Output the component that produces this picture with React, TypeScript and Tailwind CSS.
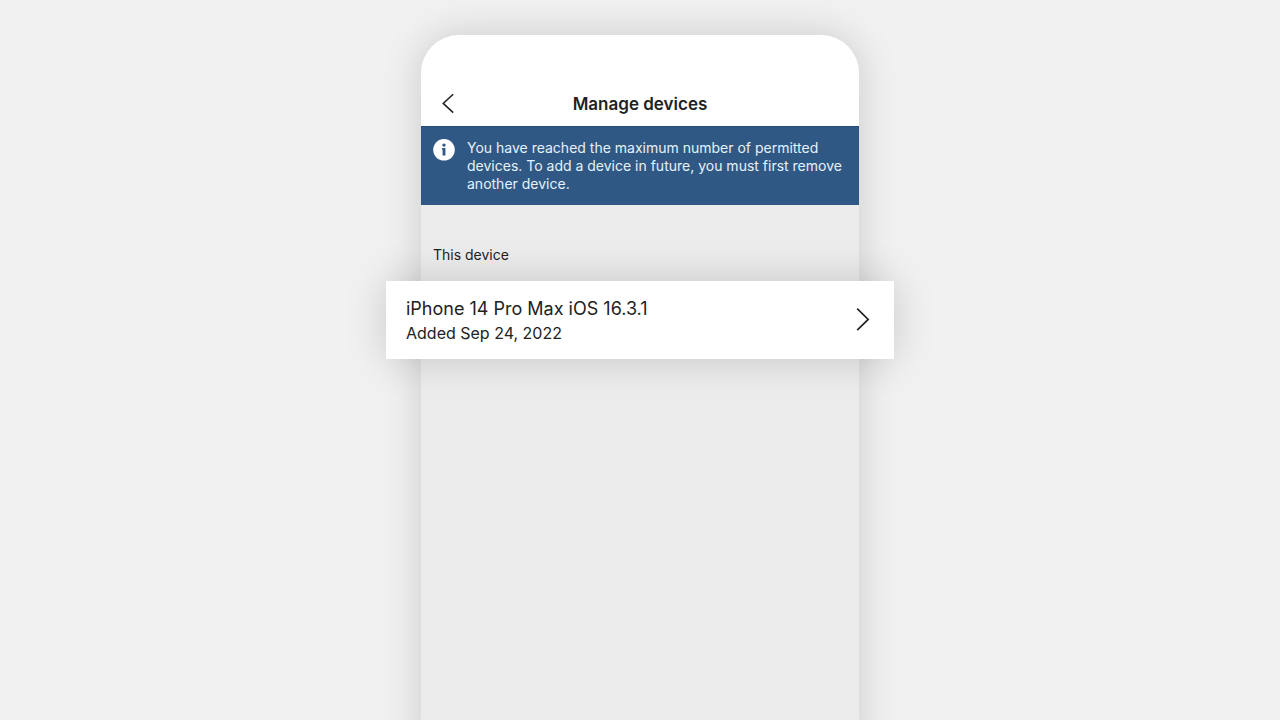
function BackIcon() {
  return (
    <svg className="h-5 w-3" viewBox="0 0 12 20" fill="none" stroke="currentColor" strokeWidth="1.5" aria-hidden="true">
      <path d="M11.2 0.2 1.2 9.4l10 9.2" />
    </svg>
  );
}

function ForwardIcon() {
  return (
    <svg className="h-6 w-3.5" viewBox="0 0 14 24" fill="none" stroke="currentColor" strokeWidth="1.7" aria-hidden="true">
      <path d="M1.2 0.6 12.2 11.4 1.2 22.2" />
    </svg>
  );
}

function InfoIcon() {
  return (
    <svg className="h-[22px] w-[22px] shrink-0" viewBox="0 0 22 22" aria-hidden="true">
      <circle cx="11" cy="10.8" r="10.8" fill="#fff" />
      <circle cx="11" cy="6.1" r="1.7" fill="#2f5984" />
      <path d="M9 8.9h3.4v7.6H9.6v-6H9z" fill="#2f5984" />
    </svg>
  );
}

function Header() {
  return (
    <header className="grid grid-cols-[1fr_auto_1fr] items-center rounded-t-[38px] bg-white px-5 pt-14 pb-[9px]">
      <button type="button" aria-label="Back" className="flex h-[26px] w-3.5 items-center justify-center">
        <BackIcon />
      </button>
      <h1 className="text-[17px] leading-[26px] font-semibold">Manage devices</h1>
    </header>
  );
}

function Notice() {
  return (
    <div role="status" className="flex gap-3 border-t border-[#264d78] bg-[#2f5984] py-3 pr-2 pl-3 text-[#e6f1fb]">
      <InfoIcon />
      <p className="text-[14px] leading-[18px]">
        You have reached the maximum number of permitted devices. To add a device in future, you must first remove
        another device.
      </p>
    </div>
  );
}

function DeviceRow({ name, added }: { name: string; added: string }) {
  return (
    <button
      type="button"
      className="-mx-[35px] flex items-center justify-between bg-white py-[15px] pr-6 pl-5 text-left shadow-[0_0_40px_rgba(0,0,0,0.17)]"
    >
      <span className="flex flex-col">
        <span className="text-[18px] leading-[26px]">{name}</span>
        <span className="text-[16px] leading-[22px]">{added}</span>
      </span>
      <ForwardIcon />
    </button>
  );
}

export default function App() {
  return (
    <div className="flex min-h-screen flex-col overflow-hidden bg-[#f1f1f1] px-9 pt-[35px] font-[Inter,sans-serif] text-[#222222]">
      <main className="mx-auto -mb-10 flex w-full max-w-[438px] grow flex-col rounded-t-[38px] bg-[#ececec] shadow-[0_0_40px_rgba(0,0,0,0.16)]">
        <Header />
        <Notice />
        <section aria-labelledby="this-device" className="flex flex-col pt-10">
          <h2 id="this-device" className="px-3 pb-4 text-[14px] leading-5 font-normal">
            This device
          </h2>
          <DeviceRow name="iPhone 14 Pro Max iOS 16.3.1" added="Added Sep 24, 2022" />
        </section>
      </main>
    </div>
  );
}
